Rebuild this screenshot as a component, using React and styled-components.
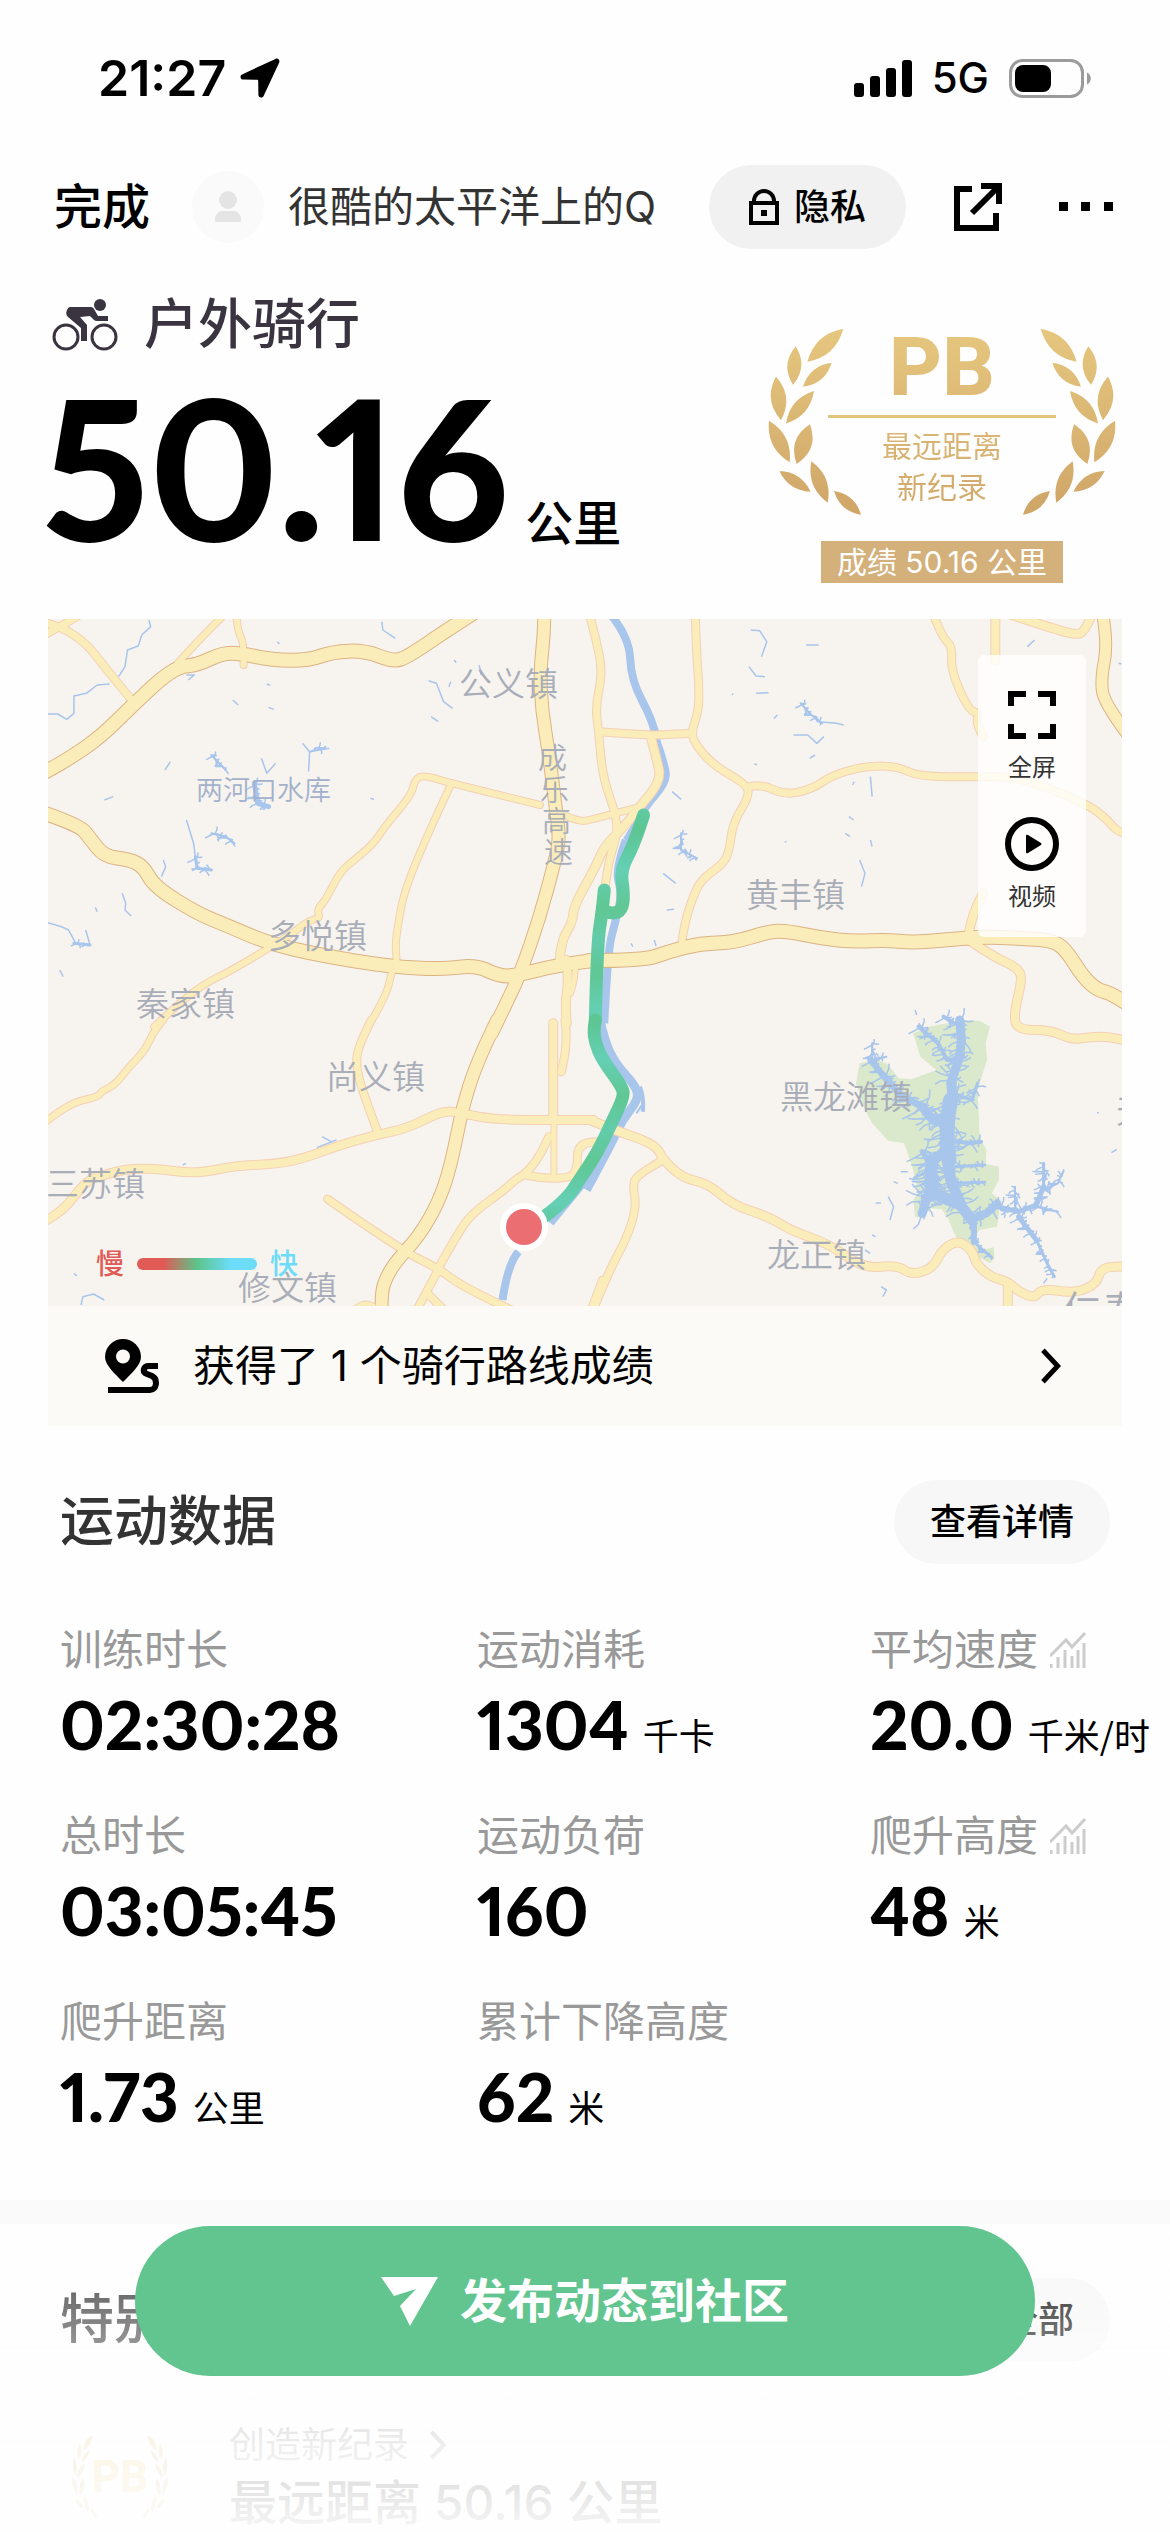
import React from 'react';
import styled, { createGlobalStyle } from 'styled-components';

const GlobalStyle = createGlobalStyle`
  * {
    box-sizing: border-box;
  }

  body {
    margin: 0;
    background: #fefefe;
    color: #000;
    font-family: Inter, "Noto Sans CJK SC", sans-serif;
    -webkit-font-smoothing: antialiased;
  }

  h1, h2, dl, dt, dd, p, ul {
    margin: 0;
    padding: 0;
    font-weight: inherit;
  }

  button {
    padding: 0;
    border: 0;
    background: none;
    color: inherit;
    font: inherit;
    cursor: pointer;
  }

  svg {
    display: block;
    flex: none;
  }
`;

const NUMBER_FONT = 'Lato, "Noto Sans CJK SC", sans-serif';

/* ---------- status bar and navigation ---------- */

const StatusBar = styled.div`
  display: flex;
  align-items: center;
  justify-content: space-between;
  height: 156px;
  padding: 0 78px 0 98px;
`;

const StatusGroup = styled.div`
  display: flex;
  align-items: center;
  gap: ${props => props.gap}px;
`;

const Clock = styled.span`
  font-size: 50px;
  line-height: 60px;
  font-weight: 600;
`;

const Network = styled.span`
  font-size: 42px;
  line-height: 60px;
  font-weight: 500;
`;

const NavBar = styled.header`
  display: flex;
  align-items: center;
  height: 102px;
  padding: 0 57px 0 54px;
`;

const DoneButton = styled.button`
  font-size: 48px;
  line-height: 60px;
  font-weight: 500;
`;

const Avatar = styled.span`
  display: flex;
  align-items: center;
  justify-content: center;
  width: 72px;
  height: 72px;
  margin: 0 24px 0 42px;
  border-radius: 50%;
  background: #fafafa;
`;

const UserName = styled.span`
  flex: 1;
  color: #333;
  font-size: 42px;
  line-height: 60px;
  white-space: nowrap;
`;

const Pill = styled.button`
  display: flex;
  align-items: center;
  justify-content: center;
  gap: 15px;
  height: 84px;
  padding: 0 ${props => props.inset}px;
  border-radius: 42px;
  background: ${props => (props.strong ? '#f1f1f1' : '#f7f7f7')};
  font-size: 36px;
  line-height: 48px;
  font-weight: 500;
  white-space: nowrap;
`;

const IconButton = styled.button`
  margin-left: ${props => props.space}px;
`;

/* ---------- hero ---------- */

const Hero = styled.section`
  display: flex;
  justify-content: space-between;
  height: 361px;
  padding: 0 54px 0 42px;
`;

const Sport = styled.h1`
  display: flex;
  align-items: center;
  gap: 26px;
  padding: 35px 0 0 10px;
  color: #3a3340;
  font-size: 54px;
  line-height: 64px;
  font-weight: 500;
`;

const Distance = styled.p`
  display: flex;
  align-items: baseline;
  gap: 16px;
  margin-top: 14px;
  font-family: ${NUMBER_FONT};
  font-size: 194px;
  line-height: 190px;
  font-weight: 900;
  font-variant-numeric: proportional-nums;
`;

const DistanceUnit = styled.span`
  font-family: "Noto Sans CJK SC", sans-serif;
  font-size: 48px;
  line-height: 60px;
  font-weight: 500;
`;

const Badge = styled.div`
  display: grid;
  justify-items: center;
  align-content: start;
  width: 348px;
  padding-top: 70px;

  & > svg {
    grid-area: 1 / 1;
  }
`;

const BadgeText = styled.div`
  grid-area: 1 / 1;
  width: 228px;
  text-align: center;
  font-size: 30px;
  line-height: 41px;
  background: linear-gradient(#e6c77f, #d0a76a);
  background-clip: text;
  color: transparent;
`;

const BadgeTitle = styled.div`
  border-bottom: 3px solid #e3c57d;
  padding-bottom: 9px;
  margin-bottom: 8px;
  font-family: "Liberation Sans Narrow", Roboto, sans-serif;
  font-size: 82px;
  line-height: 78px;
  font-weight: 800;
`;

const BadgeTag = styled.p`
  margin-top: 26px;
  padding: 0 16px;
  background: #d4b07b;
  color: #fff;
  font-size: 30px;
  line-height: 42px;
  white-space: nowrap;
`;

/* ---------- map card ---------- */

const MapCard = styled.section`
  margin: 0 48px;
  background: #f7f4ef;
`;

const MapView = styled.div`
  position: relative;
  height: 687px;
  overflow: hidden;
`;

const MapSvg = styled.svg`
  width: 100%;
  height: 100%;

  path {
    vector-effect: non-scaling-stroke;
  }

  text {
    font-family: "Noto Sans CJK SC", sans-serif;
    font-weight: 350;
  }
`;

const MapTools = styled.div`
  position: absolute;
  top: 36px;
  right: 36px;
  display: grid;
  gap: 32px;
  width: 108px;
  padding: 33px 0 23px;
  border-radius: 6px;
  background: rgba(255, 255, 255, 0.8);
`;

const MapTool = styled.button`
  display: grid;
  justify-items: center;
  gap: 9px;
  color: #333;
  font-size: 24px;
  line-height: 34px;
`;

const Legend = styled.div`
  position: absolute;
  left: 48px;
  bottom: 22px;
  display: flex;
  align-items: center;
  gap: 13px;
  font-size: 28px;
  line-height: 40px;
`;

const LegendWord = styled.span`
  color: ${props => (props.fast ? '#6cdcf8' : '#e05a56')};
  font-weight: 500;
`;

const LegendBar = styled.span`
  width: 120px;
  height: 12px;
  border-radius: 6px;
  background: linear-gradient(90deg, #e05a56 22%, #5cc48a 50%, #6cdcf8 78%);
`;

const RouteLink = styled.a`
  display: flex;
  align-items: center;
  height: 120px;
  padding: 0 60px 0 57px;
  background: #fbfaf6;
  color: #000;
  font-size: 42px;
  line-height: 60px;
  text-decoration: none;
`;

const RouteText = styled.span`
  flex: 1;
  padding-left: 34px;
`;

/* ---------- statistics ---------- */

const Section = styled.section`
  padding: 54px 60px 0;
`;

const SectionHead = styled.div`
  display: flex;
  align-items: center;
  justify-content: space-between;
`;

const SectionTitle = styled.h2`
  color: #333;
  font-size: 54px;
  line-height: 64px;
  font-weight: 500;
`;

const Stats = styled.dl`
  display: grid;
  grid-template-columns: minmax(0, 417fr) minmax(0, 393fr) minmax(0, 240fr);
  grid-auto-rows: 186px;
  padding-top: 56px;
`;

const Stat = styled.div`
  white-space: nowrap;
`;

const StatLabel = styled.dt`
  display: flex;
  align-items: center;
  gap: 12px;
  color: #999;
  font-size: 42px;
  line-height: 60px;
`;

const StatValue = styled.dd`
  display: flex;
  align-items: baseline;
  gap: 14px;
  padding-top: 2px;
  font-family: ${NUMBER_FONT};
  font-size: 67px;
  line-height: 84px;
  font-weight: 900;
  font-variant-numeric: proportional-nums;
`;

const StatUnit = styled.span`
  font-family: "Noto Sans CJK SC", sans-serif;
  font-size: 36px;
  line-height: 48px;
  font-weight: 400;
`;

const Divider = styled.div`
  height: 24px;
  margin-top: 22px;
  background: #fafafa;
`;

/* ---------- records ---------- */

const RecordRow = styled.div`
  display: flex;
  gap: 61px;
  padding: 55px 0 0 12px;
`;

const RecordMark = styled.div`
  display: grid;
  place-items: center;
  width: 96px;
  height: 96px;
  margin-top: 12px;
  color: #ecca72;
  font-family: "Liberation Sans Narrow", Roboto, sans-serif;
  font-size: 44px;
  line-height: 48px;
  font-weight: 800;

  & > * {
    grid-area: 1 / 1;
  }
`;

const RecordKind = styled.p`
  display: flex;
  align-items: center;
  gap: 20px;
  color: #999;
  font-size: 36px;
  line-height: 56px;
`;

const RecordValue = styled.p`
  font-size: 48px;
  line-height: 60px;
  font-weight: 500;
  white-space: nowrap;
`;

const Footer = styled.footer`
  position: fixed;
  left: 0;
  right: 0;
  bottom: 0;
  padding: 0 135px 156px;
  background: linear-gradient(
    rgba(254, 254, 254, 0),
    rgba(254, 254, 254, 0.34) 26%,
    rgba(254, 254, 254, 0.84) 72%,
    rgba(254, 254, 254, 0.97)
  );
`;

const PublishButton = styled.button`
  display: flex;
  align-items: center;
  justify-content: center;
  gap: 22px;
  width: 100%;
  height: 150px;
  border-radius: 75px;
  background: #62c590;
  color: #fff;
  font-size: 47px;
  line-height: 60px;
  font-weight: 600;
`;

/* ---------- icons ---------- */

const LocationIcon = () => (
    <svg width="40" height="40" viewBox="0 0 40 40" aria-hidden="true">
        <path d="M35.5 .9 2 16.4C-.4 17.600.2 21.500 3 21.600L17 21.800C17.700 21.800 18.200 22.300 18.200 23L18.400 37C18.500 39.900 22.400 40.400 23.600 38L39.200 4.500C40.200 2.200 37.800-.2 35.500.9Z" />
    </svg>
);

const SignalIcon = () => (
    <svg width="58" height="38" viewBox="0 0 58 38" aria-hidden="true">
        <rect y="24" width="10" height="14" rx="3" />
        <rect x="16" y="17" width="10" height="21" rx="3" />
        <rect x="32" y="9" width="10" height="29" rx="3" />
        <rect x="48" y="1" width="10" height="37" rx="3" />
    </svg>
);

const BatteryIcon = () => (
    <svg width="83" height="39" viewBox="0 0 83 39" aria-hidden="true">
        <rect x="1.500" y="1.500" width="72" height="36" rx="12" fill="none" stroke="#9b9b9b" strokeWidth="3" />
        <rect x="6" y="6" width="36" height="27" rx="8" />
        <path d="M78 13.500C83 15.500 83 23.500 78 25.500Z" fill="#9b9b9b" />
    </svg>
);

const PersonIcon = () => (
    <svg width="26" height="32" viewBox="0 0 26 32" fill="#e4e4e4" aria-hidden="true">
        <circle cx="13" cy="9" r="9" />
        <path d="M5 20H21Q26 23 26 28V30Q26 31 24 31H2Q0 31 0 30V28Q0 23 5 20Z" />
    </svg>
);

const LockIcon = () => (
    <svg width="30" height="36" viewBox="0 0 30 36" fill="none" stroke="#000" strokeWidth="4" aria-hidden="true">
        <rect x="2" y="14" width="26" height="20" />
        <path d="M5 14V12A10 10 0 0 1 25 12V14" />
        <path d="M12 24H18" strokeWidth="6" />
    </svg>
);

const ExportIcon = () => (
    <svg width="48" height="48" viewBox="0 0 48 48" fill="none" stroke="#000" strokeWidth="6" aria-hidden="true">
        <path d="M18 6H3V45H42V30" />
        <path d="M27 3H45V21M45 3 18 30" />
    </svg>
);

const MoreIcon = () => (
    <svg width="54" height="10" viewBox="0 0 54 10" aria-hidden="true">
        <path d="M0 0H9V9H0ZM22 0H31V9H22ZM45 0H54V9H45Z" />
    </svg>
);

const CyclistIcon = () => (
    <svg width="66" height="52" viewBox="0 0 66 52" fill="#3a3340" aria-hidden="true">
        <g fill="none" stroke="#3a3340" strokeWidth="3">
            <circle cx="14" cy="38" r="12" />
            <circle cx="52" cy="38" r="12" />
        </g>
        <circle cx="48" cy="6" r="6" />
        <path d="M18 8H39Q41 8 42 10L46 17H56V22H45Q43 22 42 21L38 17 28 18 35 26V42H29V29L16 18Q13 15 15 11Q16 8 18 8Z" />
    </svg>
);

const FullscreenIcon = () => (
    <svg width="54" height="54" viewBox="0 0 54 54" fill="none" stroke="#000" strokeWidth="6" aria-hidden="true">
        <path d="M6 18V6H21M33 6H48V18M48 36V48H33M21 48H6V36" />
    </svg>
);

const PlayIcon = () => (
    <svg width="54" height="54" viewBox="0 0 54 54" aria-hidden="true">
        <circle cx="27" cy="27" r="24" fill="none" stroke="#000" strokeWidth="6" />
        <path d="M21 19Q21 17 23 18L36 26Q37 27 36 28L23 36Q21 37 21 35Z" />
    </svg>
);

const RouteIcon = () => (
    <svg width="54" height="54" viewBox="0 0 54 54" aria-hidden="true">
        <path fillRule="evenodd" d="M18 0A18 18 0 0 1 36 18C36 26 26 35 18 43C10 35 0 26 0 18A18 18 0 0 1 18 0ZM18 10.500A7 7 0 1 0 18 24.500A7 7 0 1 0 18 10.500Z" />
        <path fill="none" stroke="#000" strokeWidth="6" d="M53 27H44C38 27 37 33 42 35L47 37C53 40 52 51 45 51H3" />
    </svg>
);

const ChevronIcon = ({ color = '#000', size = 36 }) => (
    <svg width={size * 0.6} height={size} viewBox="0 0 22 36" fill="none" stroke={color} strokeWidth="5" aria-hidden="true">
        <path d="M3 2 18 18 3 34" />
    </svg>
);

const TrendIcon = () => (
    <svg width="36" height="36" viewBox="0 0 36 36" fill="none" stroke="#ccc" strokeWidth="3" aria-hidden="true">
        <path d="M0 24 16 8 22 15 35 1" />
        <path d="M1 36V32M8 36V25M15 36V18M22 36V24M28 36V18M34 36V11" />
    </svg>
);

const SendIcon = () => (
    <svg width="57" height="49" viewBox="0 0 57 49" fill="#fff" aria-hidden="true">
        <path d="M0 0H57L29 49 19 29 35 12 13 19Z" />
    </svg>
);

/* a leaf runs between two tips and bulges by `w` on both sides */
const leaf = ([x1, y1, x2, y2, w]) => {
    const length = Math.hypot(x2 - x1, y2 - y1);
    const nx = (-(y2 - y1) / length) * w;
    const ny = ((x2 - x1) / length) * w;
    const mx = (x1 + x2) / 2;
    const my = (y1 + y2) / 2;

    return `M${x1} ${y1}Q${mx + nx} ${my + ny} ${x2} ${y2}Q${mx - nx} ${my - ny} ${x1} ${y1}Z`;
};

const LEAVES = [
    [226, 2, 118, 101, 46],
    [83, 55, 75, 170, 42],
    [191, 104, 105, 176, 36],
    [24, 145, 39, 276, 46],
    [138, 189, 54, 286, 40],
    [3, 278, 65, 402, 44],
    [126, 288, 86, 407, 50],
    [34, 428, 128, 490, 34],
    [130, 399, 179, 523, 42],
    [198, 488, 279, 559, 34],
];

const Laurel = ({ width, height }) => (
    <svg width={width} height={height} viewBox="0 0 1044 560" preserveAspectRatio="none" aria-hidden="true">
        <defs>
            <linearGradient id="gold" gradientUnits="userSpaceOnUse" x1="0" y1="0" x2="0" y2="560">
                <stop offset="0" stopColor="#e6c77f" />
                <stop offset="1" stopColor="#cfa568" />
            </linearGradient>
        </defs>
        <g fill="url(#gold)">
            <path d={LEAVES.map(leaf).join('')} />
            <path d={LEAVES.map(leaf).join('')} transform="translate(1044 0) scale(-1 1)" />
        </g>
    </svg>
);

/* ---------- map drawing ---------- */

// the map is digitised in four tiles, each with its own origin
const TILES = {
    nw: 'translate(-8 -9) scale(.35714 .33333)',
    ne: 'translate(542 -9) scale(.35714 .33333)',
    sw: 'translate(-8 401) scale(.35714 .33333)',
    se: 'translate(542 401) scale(.35714 .33333)',
};

const ROADS = [
    // lanes
    ['nw', 7, '22,40 60,50 130,100 180,170 255,268'],
    ['nw', 7, '10,75 60,50 110,15'],
    ['nw', 6, '510,20 440,95 385,160'],
    ['nw', 6, '550,10 552,60 572,100 570,165'],
    ['nw', 6, '1400,585 1150,520 1075,495 1050,508 1040,555 965,650 935,700 880,750 840,785 800,870 775,900 785,925 755,930 700,975 640,1015 530,1085 480,1110 430,1145 380,1190 320,1250'],
    ['sw', 6, '345,0 320,30 295,90 250,140 210,195 170,215 165,230 80,250 10,310'],
    ['nw', 6, '1150,525 1095,650 1020,840 1000,960 995,1010 1000,1060 985,1080 970,1160 915,1255'],
    ['sw', 7, '928,0 890,80 885,140 905,220 945,335'],
    ['nw', 8, '1475,1050 1480,1120 1470,1180 1475,1240'],
    ['nw', 5, '1500,1050 1500,1110 1485,1150'],
    ['sw', 7, '1470,0 1480,70 1460,155'],
    ['sw', 8, '1437,10 1437,300'],
    ['sw', 5, '1439,290 1439,460'],
    ['ne', 7, '0,20 20,100 35,190 15,290 25,370 35,500 75,620 75,680 50,760 40,850'],
    ['ne', 8, '170,380 185,440 200,510 140,590 95,650 40,710 20,760 -10,820 -45,890 -50,940 -80,990 -85,1050'],
    ['ne', 6, '-75,615 -30,635 0,630 70,610 135,592'],
    ['ne', 7, '295,10 298,130 305,220 305,300 282,370 300,410 345,465 440,525 445,560 400,640 390,720 375,760 310,810 285,870 265,940 258,990'],
    ['ne', 7, '445,530 480,522 545,555 620,538 680,495 770,468 860,468 920,500 1090,500 1200,500 1390,580 1450,630 1475,665 1510,675'],
    ['ne', 7, '25,365 160,375 200,375 280,370'],
    ['ne', 7, '960,10 985,80 1015,110 1010,180 1060,300 1090,310 1080,340 1100,380'],
    ['ne', 8, '1135,20 1135,150'],
    ['ne', 8, '1180,15 1280,50 1360,75 1385,65 1405,15'],
    ['ne', 8, '1060,980 1065,920 1100,850'],
    ['ne', 8, '1060,990 1130,1040 1200,1075 1210,1110 1185,1220 1200,1260 1290,1260 1350,1290 1400,1280 1460,1280 1510,1295'],
    ['sw', 8, '10,605 60,580 130,480 180,465 250,445 340,448 410,458 470,455 550,437 700,430 840,375 940,345 1030,325 1130,270 1180,280 1270,298 1400,300 1550,300'],
    ['se', 8, '0,300 80,335 150,360 190,385 205,420 260,475 330,490 400,555 500,590 560,630 650,665 700,695 770,745 860,735 900,765 960,745 985,690 1030,660 1070,690 1080,730 1120,770 1170,785 1200,815 1245,835 1265,805 1360,820 1420,790 1430,745 1480,738 1510,740'],
    ['se', 8, '1170,790 1170,880'],
    ['se', 7, '205,420 130,465 120,500 130,560 105,650 50,760 5,880'],
    ['sw', 7, '805,537 1010,690 1115,745 1190,805 1340,880'],
    ['sw', 7, '1115,745 1170,640 1210,580 1300,510 1330,480 1360,460 1400,410 1425,350'],
    ['sw', 7, '1360,465 1400,475 1480,475 1505,450 1505,365 1560,365'],
    ['sw', 7, '1115,750 1085,810 1050,880'],
    ['sw', 7, '1085,820 1140,880'],
    ['sw', 7, '880,875 905,845 930,860'],
    ['sw', 7, '1540,880 1575,780'],
    // highways
    ['nw', 13, '-10,500 22,482 90,440 170,380 260,285 340,205 390,170 440,165 510,130 560,130 650,150 750,152 820,125 910,122 990,155 1030,140 1140,60 1220,5'],
    ['nw', 13, '0,605 110,645 140,685 180,740 250,748 290,770 320,830 440,910 520,945 640,1000 780,1035 980,1070 1130,1078 1220,1065 1290,1100 1340,1095 1450,1065 1545,1052'],
    ['ne', 13, '-5,1052 150,1052 220,1025 310,1000 400,998 500,965 550,963 650,985 740,995 830,990 900,998 1000,990 1100,980 1200,985 1290,990 1330,1015 1380,1100 1420,1140 1460,1150 1510,1185'],
    ['nw', 12, '1412,10 1412,70 1400,180 1405,300 1425,430 1445,600 1455,690 1440,760 1400,920 1345,1090 1310,1170 1265,1270'],
    ['sw', 12, '1280,0 1230,110 1185,250 1150,440 1115,550 1060,650 1000,720 970,770 955,820 957,880'],
    ['ne', 11, '1435,10 1450,100 1430,210 1440,280 1510,380'],
];

const RIVER = [
    ['ne', 8, '55,10 110,80 115,210 175,330 185,380'],
    ['ne', 6, '185,380 215,470 215,520 150,600 100,690'],
    ['ne', 8, '100,690 70,780 90,850 70,940 50,1020 40,1240'],
    ['se', 9, '28,0 40,60 70,130 130,200 135,240 90,300 60,370 10,470 -10,510'],
    ['se', 4, '140,200 152,235 148,275'],
    ['se', 2, '152,245 130,280'],
    ['sw', 7, '1545,460 1430,610'],
    ['sw', 8, '1340,695 1310,730 1295,840'],
];

const TRACK = [
    ['ne', '150,615 125,700 85,780 95,850 90,900 65,912 45,905'],
    ['ne', '40,840 35,900 20,1000 15,1230'],
    ['se', '15,0 10,30 15,70 35,120 90,200 95,230 60,310 20,400 -30,480 -60,530 -125,590 -170,620'],
];

const CREEKS = [
    ['nw', '305,30 310,50 285,75 275,108 245,120 238,170 220,200'],
    ['nw', '195,222 160,225 130,250 95,258 95,310 75,328 50,312 22,312'],
    ['nw', '957,35 960,60 995,85'],
    ['nw', '410,195 432,195 415,210 M480,435 515,475 M620,445 635,490 660,460 M735,400 755,425 810,415 M755,425 752,485'],
    ['nw', '350,480 365,455 M180,570 205,560 M540,270 555,285 M640,292 655,298 M635,222 645,226 M665,95 670,102'],
    ['nw', '410,630 430,700 435,740 M230,850 240,880 238,900 255,918 M155,892 160,905 M340,800 352,770 345,750'],
    ['nw', '22,938 60,950 80,960 100,1000 140,1005 128,960 M55,1080 65,1100 M1095,320 1115,335 M1088,212 1110,220 1130,275 1155,295'],
    ['nw', '1160,150 1165,158 M1230,165 1235,195 M1145,230 1150,215 M925,565 935,568'],
    ['ne', '450,60 475,62 495,95 480,140 M445,170 465,198 490,200 M605,105 640,105 M465,250 500,248'],
    ['ne', '570,375 610,375 635,400 655,380 M640,335 690,340 710,345 M515,325 525,315 M615,445 630,435 M400,250 398,255'],
    ['ne', '1225,110 1245,90 M1480,160 1488,162 M230,545 255,568 M735,525 740,515 M785,500 790,560 M725,620 738,630'],
    ['ne', '715,670 728,680 M785,690 790,710 M755,750 770,790 760,830 M205,790 240,820 M180,990 185,1008 M115,1000 120,1010'],
    ['ne', '910,1200 915,1215 M920,1240 935,1260 M430,965 440,965 M545,695 550,695 M460,462 468,464 M215,900 235,898'],
    ['sw', '775,383 830,360 M790,350 815,365 M115,855 120,830 150,822 180,840 M95,760 103,768 M400,435 408,430'],
    ['se', '1460,398 1475,388 M850,485 862,490 M835,530 850,560 840,600 M815,800 830,810 820,830 M1270,790 1280,775'],
    ['se', '770,690 785,700 M800,550 815,548 M870,455 890,455 M790,645 800,650 M1420,278 1425,278'],
];

const LAKES = [
    ['se', 9, 20, '1035,0 1040,60 1035,110 1010,190 1015,240'],
    ['se', 15, 28, '1010,240 1000,300 1000,370 1005,420'],
    ['se', 9, 26, '930,260 960,300 1000,310'],
    ['se', 9, 24, '1000,380 950,440 950,510 930,580'],
    ['se', 11, 24, '1000,400 1010,480 1040,560 1070,600'],
    ['se', 12, 22, '955,440 960,520 1030,550'],
    ['se', 5, 20, '930,395 950,430 970,480'],
    ['se', 4, 14, '920,20 975,70 1000,120 1035,120'],
    ['se', 6, 12, '785,120 820,165'],
    ['se', 7, 18, '820,165 870,225 930,260'],
    ['se', 2, 10, '790,70 790,120 830,110'],
    ['se', 3, 14, '1015,220 1070,240 1085,190'],
    ['se', 4, 14, '1010,360 1060,370 1095,365'],
    ['se', 3, 8, '1020,440 1105,435'],
    ['se', 3, 8, '1010,490 1105,487'],
    ['se', 6, 6, '1075,610 1075,665'],
    ['se', 3, 8, '1075,665 1100,690 1125,712'],
    ['se', 8, 14, '1075,595 1110,580 1140,550'],
    ['se', 5, 14, '1140,560 1200,575 1250,555 1270,500'],
    ['se', 3, 12, '1270,500 1270,430'],
    ['se', 2, 10, '1270,510 1310,490 1325,455'],
    ['se', 2, 10, '1190,570 1190,500'],
    ['se', 2, 10, '1250,560 1310,575'],
    ['se', 5, 12, '1200,590 1250,660'],
    ['se', 3, 8, '1250,660 1280,730 1300,770'],
    ['nw', 5, 12, '600,520 610,580 640,590'],
    ['nw', 2, 8, '480,435 520,480'],
    ['nw', 2, 10, '480,670 520,680 545,700'],
    ['nw', 3, 10, '435,740 440,775 480,780'],
    ['nw', 3, 6, '95,1000 140,1005'],
    ['nw', 2, 8, '770,415 800,415'],
    ['ne', 2, 8, '590,280 620,315 650,340'],
    ['ne', 2, 9, '255,670 255,720 300,745'],
    ['ne', 4, 12, '990,1220 1020,1240'],
];

const GREEN_AREA = 'M905 40 950 20 1000 10 1030 0 1090 2 1120 20 1108 70 1112 120 1085 210 1090 320 1090 350 1110 390 1108 432 1145 440 1145 480 1125 520 1150 540 1140 620 1090 630 1068 665 1100 690 1130 682 1133 715 1120 730 1040 680 1020 640 1005 600 985 568 955 565 930 595 910 590 905 540 918 520 905 450 880 370 835 362 790 310 770 270 745 190 755 130 800 120 830 130 865 175 900 178 970 150 925 110Z';

const LABELS = [
    [411, 77, '公义镇'],
    [220, 329, '多悦镇'],
    [88, 397, '秦家镇'],
    [278, 470, '尚义镇'],
    [-2, 577, '三苏镇'],
    [190, 681, '修文镇'],
    [698, 288, '黄丰镇'],
    [732, 490, '黑龙滩镇'],
    [719, 648, '龙正镇'],
];

const HIGHWAY_NAME = [[490, 150, '成'], [492, 182, '乐'], [494, 213, '高'], [496, 244, '速']];

const parse = text => text.split(' ').map(pair => pair.split(',').map(Number));

const smooth = (text) => {
    const points = parse(text);
    const last = points[points.length - 1];
    const middle = points.slice(1, -1).map(([x, y], i) => {
        const [nx, ny] = points[i + 2];
        const end = i + 2 === points.length - 1 ? last : [(x + nx) / 2, (y + ny) / 2];
        return `Q${x} ${y} ${end[0]} ${end[1]}`;
    });

    return `M${points[0]}${middle.join('')}L${last}`;
};

// shoreline spikes scattered along a spine
const shore = (text, reach) => {
    const points = parse(text);
    let seed = 7;
    const next = () => {
        seed = (seed * 137 + 71) % 997;
        return seed / 997;
    };
    let d = `M${points.join(' ')}`;

    points.slice(1).forEach(([x, y], i) => {
        const [px, py] = points[i];
        const steps = Math.max(2, Math.round(Math.hypot(x - px, y - py) / 5));
        for (let s = 0; s < steps; s += 1) {
            const angle = next() * Math.PI * 2;
            const size = reach * (0.6 + next() * 1.2);
            const sx = px + ((x - px) * s) / steps;
            const sy = py + ((y - py) * s) / steps;
            const bend = angle + next() - 0.5;
            d += `M${sx.toFixed(1)} ${sy.toFixed(1)}l${(Math.cos(angle) * size).toFixed(1)} ${(Math.sin(angle) * size).toFixed(1)}l${(Math.cos(bend) * size * 0.5).toFixed(1)} ${(Math.sin(bend) * size * 0.5).toFixed(1)}`;
        }
    });

    return d;
};

const RideMap = () => (
    <MapSvg viewBox="0 0 1074 687" preserveAspectRatio="xMidYMid slice" role="img" aria-label="骑行轨迹地图">
        <defs>
            <linearGradient id="track" gradientUnits="userSpaceOnUse" x1="0" y1="0" x2="0" y2="330" spreadMethod="reflect">
                <stop offset="0" stopColor="#5cc591" />
                <stop offset=".35" stopColor="#64cfb4" />
                <stop offset=".7" stopColor="#60c794" />
                <stop offset="1" stopColor="#62cbaa" />
            </linearGradient>
        </defs>
        <path d={GREEN_AREA} transform={TILES.se} fill="#dae8cb" />
        <g fill="none" stroke="#a8c5ec" strokeLinejoin="round">
            {CREEKS.map(([tile, d]) => (
                <path key={d} d={`M${d}`} transform={TILES[tile]} strokeWidth="1.500" />
            ))}
            {LAKES.map(([tile, width, reach, d]) => (
                <g key={d}>
                    <path d={shore(d, reach)} transform={TILES[tile]} strokeWidth="1.500" />
                    <path d={`M${d}`} transform={TILES[tile]} strokeWidth={width} strokeLinecap="round" />
                </g>
            ))}
            {RIVER.map(([tile, width, d]) => (
                <path key={d} d={smooth(d)} transform={TILES[tile]} strokeWidth={width} />
            ))}
        </g>
        <g fill="none" strokeLinecap="round" strokeLinejoin="round">
            {ROADS.map(([tile, width, d]) => (
                <path key={d} d={smooth(d)} transform={TILES[tile]} stroke={width > 10 ? '#dcb384' : '#f4d0b5'} strokeWidth={width + 2} />
            ))}
            {ROADS.map(([tile, width, d]) => (
                <path key={d} d={smooth(d)} transform={TILES[tile]} stroke="#faedb9" strokeWidth={width} />
            ))}
        </g>
        <g fill="#a9adb8" fontSize="33">
            {LABELS.map(([x, y, name]) => <text key={name} x={x} y={y}>{name}</text>)}
            <text x="1068" y="504">天</text>
            <text x="1014" y="706" fontSize="40" fontWeight="500">仁寿县</text>
            <text x="148" y="181" fontSize="27" fill="#a3b1cd">两河口水库</text>
            {HIGHWAY_NAME.map(([x, y, name]) => <text key={name} x={x} y={y} fontSize="29">{name}</text>)}
        </g>
        <g fill="none" stroke="url(#track)" strokeLinecap="round" strokeLinejoin="round" strokeWidth="13">
            {TRACK.map(([tile, d]) => <path key={d} d={smooth(d)} transform={TILES[tile]} />)}
        </g>
        <circle cx="476" cy="608" r="24" fill="#fff" />
        <circle cx="476" cy="608" r="18" fill="#ea6e72" />
    </MapSvg>
);

/* ---------- page ---------- */

const STATS = [
    { label: '训练时长', value: '02:30:28' },
    { label: '运动消耗', value: '1304', unit: '千卡' },
    { label: '平均速度', value: '20.0', unit: '千米/时', trend: true },
    { label: '总时长', value: '03:05:45' },
    { label: '运动负荷', value: '160' },
    { label: '爬升高度', value: '48', unit: '米', trend: true },
    { label: '爬升距离', value: '1.73', unit: '公里' },
    { label: '累计下降高度', value: '62', unit: '米' },
];

const Header = () => (
    <>
        <StatusBar>
            <StatusGroup gap={14}>
                <Clock>21:27</Clock>
                <LocationIcon />
            </StatusGroup>
            <StatusGroup gap={20}>
                <SignalIcon />
                <Network>5G</Network>
                <BatteryIcon />
            </StatusGroup>
        </StatusBar>
        <NavBar>
            <DoneButton type="button">完成</DoneButton>
            <Avatar><PersonIcon /></Avatar>
            <UserName>很酷的太平洋上的Q</UserName>
            <Pill type="button" strong inset={40}>
                <LockIcon />
                隐私
            </Pill>
            <IconButton type="button" space={48} aria-label="分享"><ExportIcon /></IconButton>
            <IconButton type="button" space={57} aria-label="更多"><MoreIcon /></IconButton>
        </NavBar>
    </>
);

const Summary = () => (
    <Hero>
        <div>
            <Sport>
                <CyclistIcon />
                户外骑行
            </Sport>
            <Distance>
                50.16
                <DistanceUnit>公里</DistanceUnit>
            </Distance>
        </div>
        <Badge>
            <Laurel width={348} height={187} />
            <BadgeText>
                <BadgeTitle>PB</BadgeTitle>
                最远距离
                <br />
                新纪录
            </BadgeText>
            <BadgeTag>成绩 50.16 公里</BadgeTag>
        </Badge>
    </Hero>
);

const RideCard = () => (
    <MapCard>
        <MapView>
            <RideMap />
            <MapTools>
                <MapTool type="button">
                    <FullscreenIcon />
                    全屏
                </MapTool>
                <MapTool type="button">
                    <PlayIcon />
                    视频
                </MapTool>
            </MapTools>
            <Legend>
                <LegendWord>慢</LegendWord>
                <LegendBar />
                <LegendWord fast>快</LegendWord>
            </Legend>
        </MapView>
        <RouteLink href="#routes">
            <RouteIcon />
            <RouteText>获得了 1 个骑行路线成绩</RouteText>
            <ChevronIcon />
        </RouteLink>
    </MapCard>
);

const App = () => (
    <>
        <GlobalStyle />
        <Header />
        <main>
            <Summary />
            <RideCard />
            <Section>
                <SectionHead>
                    <SectionTitle>运动数据</SectionTitle>
                    <Pill type="button" inset={36}>查看详情</Pill>
                </SectionHead>
                <Stats>
                    {STATS.map(({ label, value, unit, trend }) => (
                        <Stat key={label}>
                            <StatLabel>
                                {label}
                                {trend && <TrendIcon />}
                            </StatLabel>
                            <StatValue>
                                {value}
                                {unit && <StatUnit>{unit}</StatUnit>}
                            </StatValue>
                        </Stat>
                    ))}
                </Stats>
            </Section>
            <Divider />
            <Section>
                <SectionHead>
                    <SectionTitle>特别成就</SectionTitle>
                    <Pill type="button" inset={36}>查看全部</Pill>
                </SectionHead>
                <RecordRow>
                    <RecordMark>
                        <Laurel width={96} height={84} />
                        <span>PB</span>
                    </RecordMark>
                    <div>
                        <RecordKind>
                            创造新纪录
                            <ChevronIcon color="#999" size={30} />
                        </RecordKind>
                        <RecordValue>最远距离 50.16 公里</RecordValue>
                    </div>
                </RecordRow>
            </Section>
        </main>
        <Footer>
            <PublishButton type="button">
                <SendIcon />
                发布动态到社区
            </PublishButton>
        </Footer>
    </>
);

export default App;
